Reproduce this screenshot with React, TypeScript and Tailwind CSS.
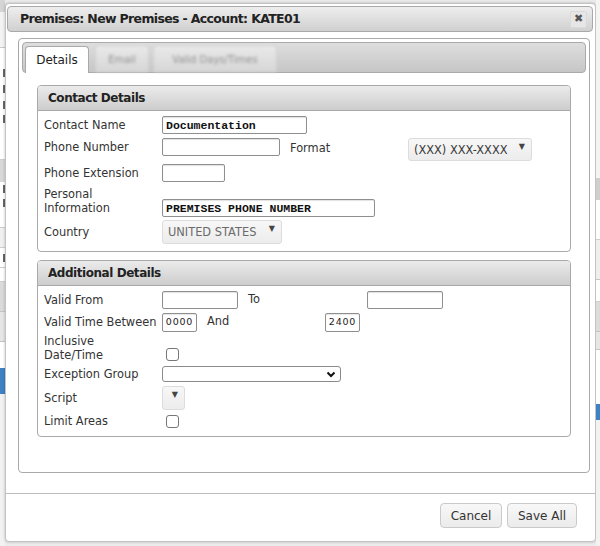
import React from 'react';

const sans = "font-['DejaVu_Sans',Verdana,sans-serif]";
const mono = "font-['Liberation_Mono','Courier_New',monospace]";

type Seg = { h: number; cls: string; mark?: boolean };

const leftSegs: Seg[] = [
  { h: 12, cls: 'bg-[#d5d5d5]' },
  { h: 36, cls: 'bg-[#f3f3f3] border-b border-[#c9c9c9]' },
  { h: 18, cls: 'bg-white' },
  { h: 14, cls: 'bg-white', mark: true },
  { h: 18, cls: 'bg-white', mark: true },
  { h: 14, cls: 'bg-white', mark: true },
  { h: 14, cls: 'bg-white', mark: true },
  { h: 34, cls: 'bg-white border-b border-[#cfcfcf]' },
  { h: 22, cls: 'bg-[#d8d8d8]' },
  { h: 14, cls: 'bg-white', mark: true },
  { h: 14, cls: 'bg-white', mark: true },
  { h: 18, cls: 'bg-white border-b border-[#cfcfcf]' },
  { h: 20, cls: 'bg-[#f0f0f0] border-b border-[#cfcfcf]' },
  { h: 20, cls: 'bg-white border-b border-[#cfcfcf]', mark: true },
  { h: 14, cls: 'bg-white border-b border-[#cfcfcf]' },
  { h: 30, cls: 'bg-[#dadada] border-b border-[#c4c4c4]' },
  { h: 30, cls: 'bg-[#e6e6e6] border-b border-[#c4c4c4]' },
  { h: 26, cls: 'bg-white' },
  { h: 26, cls: 'bg-[#3d82c4]' },
  { h: 160, cls: 'bg-[#f2f2f2]' },
];

const rightSegs: Seg[] = [
  { h: 178, cls: 'bg-[#f4f4f4]' },
  { h: 22, cls: 'bg-[#cfcfcf]' },
  { h: 40, cls: 'bg-white border-b border-[#cfcfcf]' },
  { h: 40, cls: 'bg-[#efefef] border-b border-[#c4c4c4]' },
  { h: 22, cls: 'bg-white border-b border-[#cfcfcf]' },
  { h: 30, cls: 'bg-[#dcdcdc] border-b border-[#c4c4c4]' },
  { h: 18, cls: 'bg-[#e6e6e6] border-b border-[#c4c4c4]' },
  { h: 54, cls: 'bg-white' },
  { h: 16, cls: 'bg-[#3d82c4]' },
  { h: 126, cls: 'bg-[#f2f2f2]' },
];

// page behind the dialog: only slivers of it show
function Strip({ segs, width }: { segs: Seg[]; width: string }) {
  return (
    <div className={`${width} shrink-0 flex flex-col overflow-hidden`}>
      {segs.map((s, i) => (
        <div key={i} className={`shrink-0 flex items-center justify-end ${s.cls}`} style={{ height: s.h }}>
          {s.mark && <div className="w-[2px] h-[8px] bg-[#666]" />}
        </div>
      ))}
    </div>
  );
}

function TextBox({ w, value, monoBold }: { w: string; value?: string; monoBold?: boolean }) {
  return (
    <input
      readOnly
      value={value ?? ''}
      className={`${w} h-[18px] shrink-0 rounded-[2px] border border-[#8f8f8f] bg-white px-[3px] text-[#111] shadow-[inset_0_1px_1px_rgba(0,0,0,0.12)] outline-none ${
        monoBold ? `${mono} text-[11.5px] font-bold` : ''
      }`}
    />
  );
}

function TimeBox({ value }: { value: string }) {
  return (
    <div className="w-[35px] h-[19px] shrink-0 rounded-[2px] border border-[#8f8f8f] bg-white flex items-center justify-center text-[9.5px] tracking-[0.8px] text-[#222] shadow-[inset_0_1px_1px_rgba(0,0,0,0.1)]">
      {value}
    </div>
  );
}

function Check() {
  return <div className="ml-[4px] w-[13px] h-[13px] shrink-0 rounded-[3px] border border-[#777] bg-white" />;
}

function GreySelect({ w, h, text, muted }: { w: string; h: string; text?: string; muted?: boolean }) {
  return (
    <div
      className={`${w} ${h} shrink-0 rounded-[3px] border border-[#dcdcdc] bg-gradient-to-b from-[#f7f7f7] to-[#ececec] flex items-start pt-[3px] pl-[5px] pr-[6px] ${
        muted ? 'text-[#6a6a6a]' : 'text-[#3a3a3a]'
      }`}
    >
      {text && <span className="flex-1 leading-[16px]">{text}</span>}
      <span className="text-[8px] leading-[10px] text-[#444] ml-auto">▼</span>
    </div>
  );
}

function SectionHeader({ title }: { title: string }) {
  return (
    <div className="h-[25px] shrink-0 rounded-t-[3px] border-b border-[#a9a9a9] bg-gradient-to-b from-[#ebebeb] to-[#cdcdcd] pl-[10px] flex items-center font-bold text-[12px] tracking-[-0.45px] text-[#222]">
      {title}
    </div>
  );
}

const label = 'w-[118px] shrink-0 text-[#333] leading-[14px]';

export default function App() {
  return (
    <div className={`w-[600px] h-[546px] flex bg-[#ececec] overflow-hidden text-[11.4px] ${sans}`}>
      <Strip segs={leftSegs} width="w-[5px]" />

      <div className="mt-[3px] w-[591px] h-[539px] shrink-0 rounded-[4px] border border-[#c3c3c3] bg-white flex flex-col shadow-[0_0_3px_rgba(0,0,0,0.25)]">
        {/* title bar */}
        <div className="mt-[2px] ml-[1px] mr-[2px] h-[26px] shrink-0 rounded-[4px] border border-[#a9a9a9] bg-gradient-to-b from-[#eeeeee] to-[#d0d0d0] flex items-center pl-[12px] pr-[5px]">
          <span className="flex-1 font-bold text-[12.5px] tracking-[-0.65px] text-[#222]">
            Premises: New Premises - Account: KATE01
          </span>
          <div className="w-[17px] h-[17px] rounded-[2px] bg-[#e6e6e6] border border-[#dadada] flex items-center justify-center text-[11px] text-[#555]">
            ✖
          </div>
        </div>

        {/* content panel */}
        <div className="mt-[6px] ml-[12px] mr-[5px] h-[435px] shrink-0 rounded-[4px] border border-[#a9a9a9] bg-white p-[3px] flex flex-col">
          {/* tabs */}
          <div className="h-[31px] shrink-0 rounded-[4px] border border-[#aaaaaa] bg-gradient-to-b from-[#dedede] to-[#c6c6c6] flex items-end pl-[2px] gap-[4px]">
            <div className="h-[27px] w-[64px] -mb-px rounded-t-[4px] border border-b-0 border-[#a9a9a9] bg-white flex items-center justify-center text-[12px] text-[#222]">
              Details
            </div>
            <div className="h-[27px] w-[54px] ml-[2px] rounded-t-[4px] border border-b-0 border-[#cfcfcf] bg-gradient-to-b from-[#e9e9e9] to-[#d6d6d6] flex items-center justify-center text-[10px] text-[#8f8f8f] blur-[1.4px]">
              Email
            </div>
            <div className="h-[27px] w-[124px] rounded-t-[4px] border border-b-0 border-[#cfcfcf] bg-gradient-to-b from-[#e9e9e9] to-[#d6d6d6] flex items-center justify-center text-[10px] text-[#8f8f8f] blur-[1.4px]">
              Valid Days/Times
            </div>
          </div>

          {/* contact details */}
          <div className="mt-[12px] mx-[15px] shrink-0 rounded-[4px] border border-[#a9a9a9] flex flex-col">
            <SectionHeader title="Contact Details" />
            <div className="pl-[6px] pt-[4px] pb-[6px] flex flex-col">
              <div className="h-[20px] flex items-center">
                <span className={label}>Contact Name</span>
                <TextBox w="w-[145px]" value="Documentation" monoBold />
              </div>
              <div className="h-[26px] flex items-start pt-[3px]">
                <span className={`${label} leading-[18px]`}>Phone Number</span>
                <TextBox w="w-[118px]" />
                <span className="ml-[10px] w-[118px] shrink-0 leading-[20px] text-[#333]">Format</span>
                <GreySelect w="w-[124px]" h="h-[23px]" text="(XXX) XXX-XXXX" />
              </div>
              <div className="h-[24px] flex items-center">
                <span className={label}>Phone Extension</span>
                <TextBox w="w-[63px]" />
              </div>
              <div className="h-[33px] flex items-start">
                <span className={`${label} mt-[2px]`}>
                  Personal
                  <br />
                  Information
                </span>
                <div className="mt-[14px]">
                  <TextBox w="w-[213px]" value="PREMISES PHONE NUMBER" monoBold />
                </div>
              </div>
              <div className="h-[27px] flex items-center">
                <span className={label}>Country</span>
                <GreySelect w="w-[120px]" h="h-[24px]" text="UNITED STATES" muted />
              </div>
            </div>
          </div>

          {/* additional details */}
          <div className="mt-[8px] mx-[15px] shrink-0 rounded-[4px] border border-[#a9a9a9] flex flex-col">
            <SectionHeader title="Additional Details" />
            <div className="pl-[6px] pt-[2px] pb-[4px] flex flex-col">
              <div className="h-[24px] flex items-center">
                <span className={label}>Valid From</span>
                <TextBox w="w-[76px]" />
                <span className="ml-[10px] w-[119px] shrink-0 text-[#333]">To</span>
                <TextBox w="w-[76px]" />
              </div>
              <div className="h-[20px] flex items-center">
                <span className={label}>Valid Time Between</span>
                <TimeBox value="0000" />
                <span className="ml-[10px] w-[118px] shrink-0 text-[#333]">And</span>
                <TimeBox value="2400" />
              </div>
              <div className="h-[31px] flex items-start">
                <span className={`${label} mt-[2px]`}>
                  Inclusive
                  <br />
                  Date/Time
                </span>
                <div className="mt-[16px]">
                  <Check />
                </div>
              </div>
              <div className="h-[22px] flex items-center">
                <span className={label}>Exception Group</span>
                <div className="w-[179px] h-[16px] shrink-0 rounded-[3px] border border-[#8a8a8a] bg-white flex items-center justify-end pr-[4px]">
                  <svg width="10" height="7" viewBox="0 0 10 7">
                    <path d="M1.5 1.5 L5 5 L8.5 1.5" fill="none" stroke="#111" strokeWidth="2" />
                  </svg>
                </div>
              </div>
              <div className="h-[25px] flex items-center">
                <span className={label}>Script</span>
                <GreySelect w="w-[23px]" h="h-[24px]" />
              </div>
              <div className="h-[22px] flex items-center">
                <span className={label}>Limit Areas</span>
                <Check />
              </div>
            </div>
          </div>
        </div>

        <div className="mt-[20px] h-px shrink-0 bg-[#bdbdbd]" />

        <div className="mt-[9px] mr-[18px] flex justify-end gap-[5px]">
          <div className="w-[62px] h-[25px] rounded-[4px] border border-[#cacaca] bg-gradient-to-b from-[#f8f8f8] to-[#ebebeb] flex items-center justify-center text-[12px] text-[#333]">
            Cancel
          </div>
          <div className="w-[70px] h-[25px] rounded-[4px] border border-[#cacaca] bg-gradient-to-b from-[#f8f8f8] to-[#ebebeb] flex items-center justify-center text-[12px] text-[#333]">
            Save All
          </div>
        </div>
      </div>

      <Strip segs={rightSegs} width="flex-1" />
    </div>
  );
}
